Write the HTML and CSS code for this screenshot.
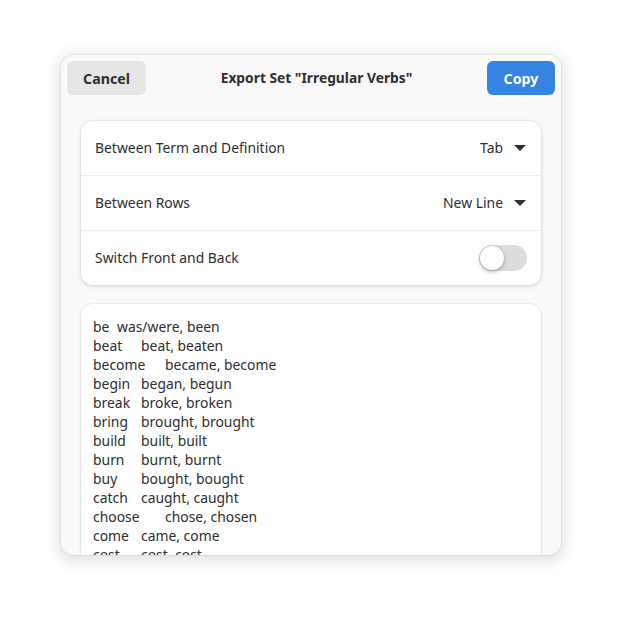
FILE: index.html
```html
<!DOCTYPE html>
<html lang="en">
<head>
<meta charset="utf-8">
<title>Export Set</title>
<link rel="stylesheet" href="styles.css">
</head>
<body>
<div class="desktop">
  <div class="dialog">
    <header class="headerbar">
      <button class="btn btn-cancel">Cancel</button>
      <div class="title">Export Set "Irregular Verbs"</div>
      <button class="btn btn-copy">Copy</button>
    </header>
    <main class="content">
      <div class="boxed-list">
        <div class="row">
          <span class="row-label">Between Term and Definition</span>
          <span class="dropdown"><span class="dd-value">Tab</span><span class="arrow"></span></span>
        </div>
        <div class="row">
          <span class="row-label">Between Rows</span>
          <span class="dropdown"><span class="dd-value">New Line</span><span class="arrow"></span></span>
        </div>
        <div class="row">
          <span class="row-label">Switch Front and Back</span>
          <span class="switch"><span class="knob"></span></span>
        </div>
      </div>
      <div class="textview">
        <div class="line"><span class="term w1">be</span>was/were, been</div>
        <div class="line"><span class="term w2">beat</span>beat, beaten</div>
        <div class="line"><span class="term w3">become</span>became, become</div>
        <div class="line"><span class="term w2">begin</span>began, begun</div>
        <div class="line"><span class="term w2">break</span>broke, broken</div>
        <div class="line"><span class="term w2">bring</span>brought, brought</div>
        <div class="line"><span class="term w2">build</span>built, built</div>
        <div class="line"><span class="term w2">burn</span>burnt, burnt</div>
        <div class="line"><span class="term w2">buy</span>bought, bought</div>
        <div class="line"><span class="term w2">catch</span>caught, caught</div>
        <div class="line"><span class="term w3">choose</span>chose, chosen</div>
        <div class="line"><span class="term w2">come</span>came, come</div>
        <div class="line"><span class="term w2">cost</span>cost, cost</div>
      </div>
    </main>
  </div>
</div>
</body>
</html>
```

FILE: styles.css
```css
* { box-sizing: border-box; }
html, body {
  margin: 0;
  padding: 0;
  background: #ffffff;
}
body {
  font-family: "Noto Sans", "Open Sans", sans-serif;
  font-size: 14px;
  color: #2e2e2e;
}
.desktop {
  width: 622px;
  height: 622px;
  padding: 55px 0 0 61px;
}
.dialog {
  width: 500px;
  height: 500px;
  background: #fafafa;
  border-radius: 13px;
  overflow: hidden;
  box-shadow: 0 0 0 1px rgba(0,0,0,0.05), 0 3px 14px 4px rgba(0,0,0,0.11);
  display: flex;
  flex-direction: column;
}
.headerbar {
  height: 46px;
  flex: none;
  display: flex;
  align-items: flex-start;
  justify-content: space-between;
  padding: 6px 6px 0 6px;
}
.btn {
  height: 34px;
  border: none;
  border-radius: 6px;
  font-family: inherit;
  font-size: 14.2px;
  font-weight: 700;
  padding: 0;
  display: flex;
  align-items: center;
  justify-content: center;
}
.btn-cancel {
  width: 79px;
  background: #e6e6e6;
  color: #2e2e2e;
}
.btn-copy {
  width: 68px;
  background: #3584e4;
  color: #ffffff;
}
.title {
  font-weight: 700;
  font-size: 13.8px;
  line-height: 33px;
  color: #2e2e2e;
}
.content {
  flex: 1;
  min-height: 0;
  padding: 20px 20px 0 20px;
  display: flex;
  flex-direction: column;
  gap: 19px;
}
.boxed-list {
  background: #ffffff;
  border-radius: 12px;
  box-shadow: 0 0 0 1px rgba(0,0,0,0.03), 0 1px 3px 1px rgba(0,0,0,0.07), 0 2px 6px 2px rgba(0,0,0,0.03);
  flex: none;
}
.row {
  height: 55px;
  display: flex;
  align-items: center;
  justify-content: space-between;
  padding: 0 14px 1px 14px;
  border-top: 1px solid #ececec;
}
.row:first-child { border-top: none; height: 54px; }
.row-label {
  font-size: 13.9px;
}
.dropdown {
  display: flex;
  align-items: center;
  gap: 11px;
  padding-right: 1px;
}
.dd-value { font-size: 13.9px; }
.arrow {
  width: 0;
  height: 0;
  border-left: 6px solid transparent;
  border-right: 6px solid transparent;
  border-top: 6px solid #2e2e2e;
}
.switch {
  width: 48px;
  height: 26px;
  border-radius: 13px;
  background: #dcdcdc;
  padding: 1px;
  display: flex;
  align-items: center;
}
.knob {
  width: 24px;
  height: 24px;
  border-radius: 50%;
  background: #ffffff;
  box-shadow: 0 2px 4px rgba(0,0,0,0.25), 0 0 0 1px rgba(0,0,0,0.05);
}
.textview {
  flex: 1;
  background: #ffffff;
  border-radius: 12px 12px 0 0;
  box-shadow: 0 0 0 1px rgba(0,0,0,0.03), 0 1px 3px 1px rgba(0,0,0,0.07);
  padding: 13px 12px 0 12px;
  overflow: hidden;
  font-size: 13.9px;
  line-height: 19px;
}
.line {
  white-space: pre;
  display: flex;
}
.term { display: inline-block; flex: none; }
.w1 { width: 24px; }
.w2 { width: 48px; }
.w3 { width: 72px; }
```
